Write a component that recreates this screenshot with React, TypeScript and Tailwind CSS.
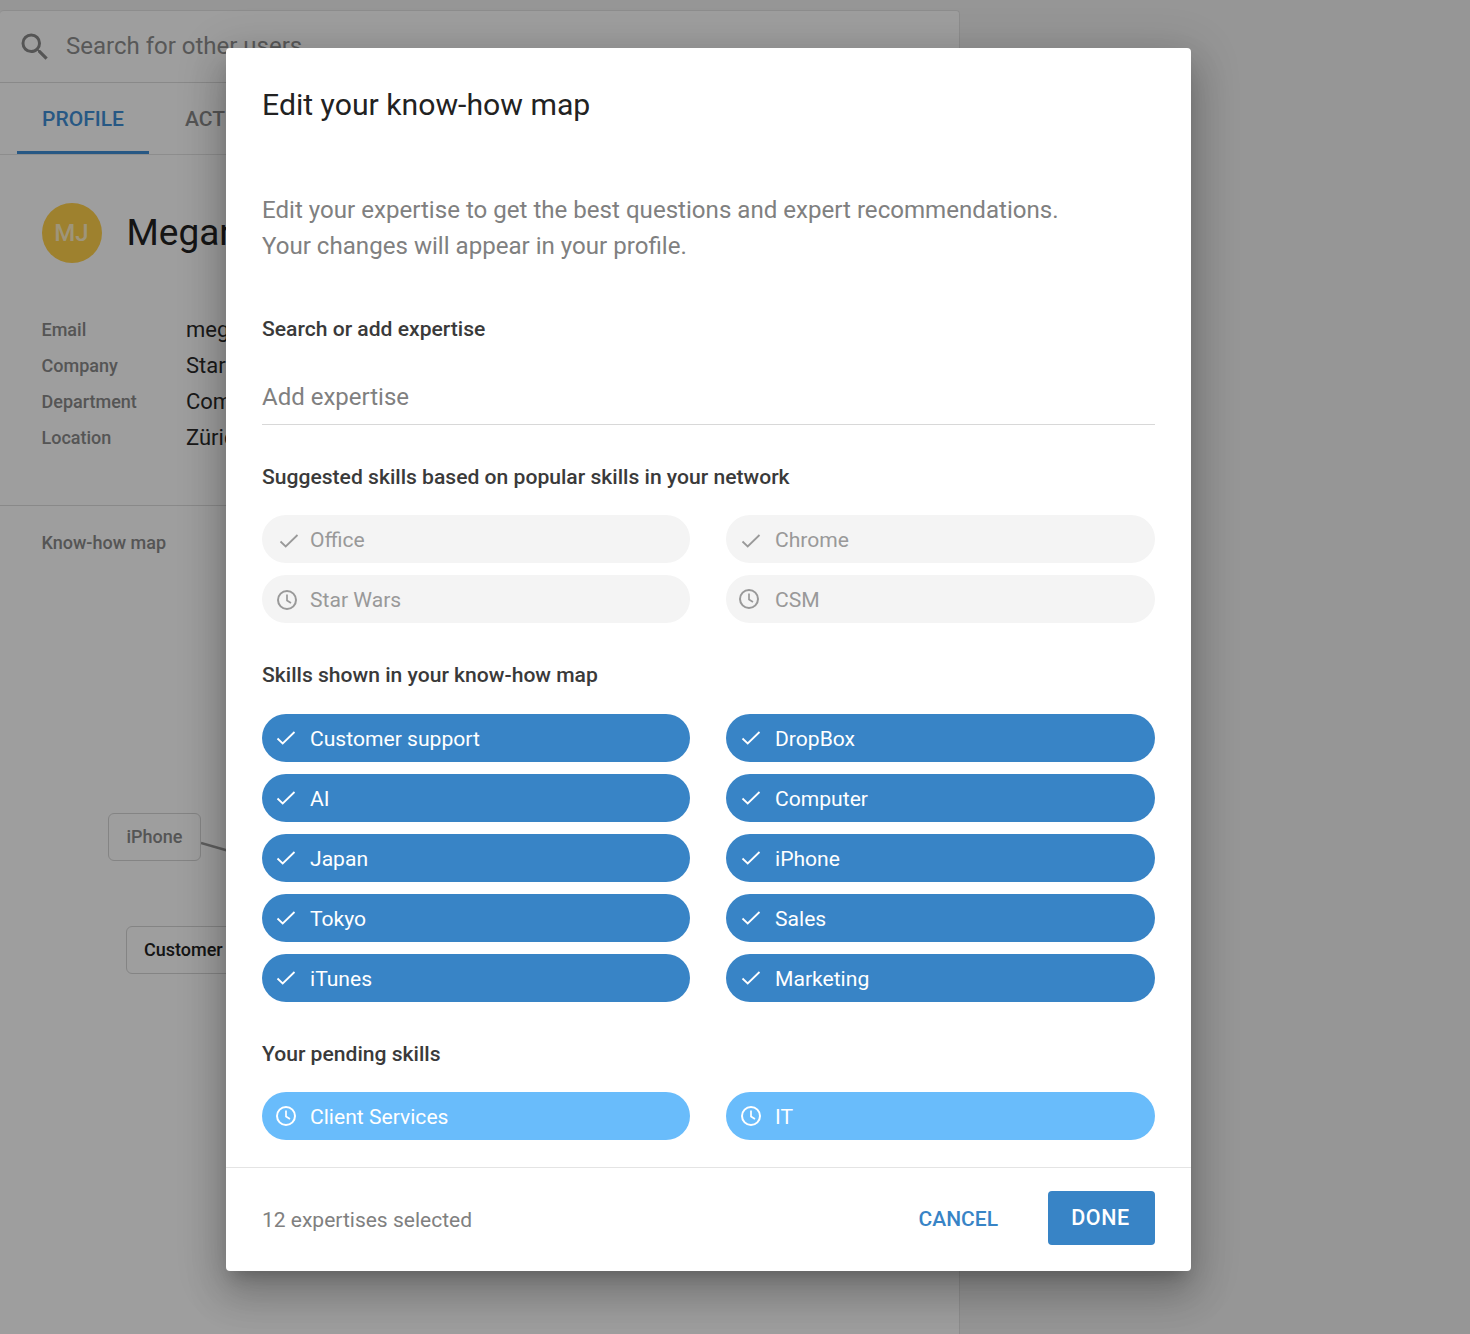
import React from 'react';

const suggested = [
  { name: 'Office', icon: 'check', iconClass: 'translate-x-[3px] translate-y-[2px]' },
  { name: 'Chrome', icon: 'check', iconClass: 'translate-y-[2px]' },
  { name: 'Star Wars', icon: 'clock', iconClass: 'translate-x-[1px] translate-y-[1px]' },
  { name: 'CSM', icon: 'clock', iconClass: '-translate-x-[2px]' },
];
const shown = ['Customer support', 'DropBox', 'AI', 'Computer', 'Japan', 'iPhone', 'Tokyo', 'Sales', 'iTunes', 'Marketing'];
const pending = ['Client Services', 'IT'];
const details = [
  ['Email', 'megan.jones@starwars.com'],
  ['Company', 'Star Wars Inc.'],
  ['Department', 'Communications'],
  ['Location', 'Zürich'],
];

const CheckIcon = ({ className = '' }: { className?: string }) => (
  <svg width="24" height="24" viewBox="0 0 24 24" fill="none" stroke="currentColor" strokeWidth="1.8" className={`shrink-0 ${className}`}>
    <path d="M3.5 12.5l5.2 5L20.5 6" />
  </svg>
);

const ClockIcon = ({ className = '' }: { className?: string }) => (
  <svg width="24" height="24" viewBox="0 0 24 24" fill="none" stroke="currentColor" strokeWidth="2" className={`shrink-0 ${className}`}>
    <circle cx="12" cy="12" r="9" />
    <path d="M12 6.5V12.5l4 2.5" strokeWidth="1.7" />
  </svg>
);

const Pill = ({ name, icon, className, iconClass }: { name: string; icon: string; className: string; iconClass?: string }) => (
  <div className={`flex h-12 items-center gap-3 rounded-full pl-3 text-[21.1px] even:pl-[13px] ${className}`}>
    {icon === 'check' ? <CheckIcon className={iconClass} /> : <ClockIcon className={iconClass} />}
    <span className="pt-[1px]">{name}</span>
  </div>
);

const SectionTitle = ({ children }: { children: React.ReactNode }) => (
  <h3 className="text-[21.1px] leading-7 font-medium text-[#3a3a3a]">{children}</h3>
);

export default function App() {
  return (
    <div className="relative h-[1334px] w-[1470px] overflow-hidden bg-[#f2f2f2] font-['Roboto',sans-serif]">
      {/* page behind the dialog */}
      <div className="mt-[10px] h-[1324px] w-[960px] rounded-t border-t border-r border-[#e4e4e4] bg-white">
        <div className="flex h-[72px] items-center gap-[13px] border-b border-[#dddddd] pl-[17px]">
          <svg width="36" height="36" viewBox="0 0 24 24" fill="#8a8a8a">
            <path d="M15.5 14h-.79l-.28-.27A6.471 6.471 0 0 0 16 9.5 6.5 6.5 0 1 0 9.5 16c1.61 0 3.09-.59 4.23-1.57l.27.28v.79l5 4.99L20.49 19l-4.99-5zm-6 0C7.01 14 5 11.99 5 9.5S7.01 5 9.5 5 14 7.01 14 9.5 11.99 14 9.5 14z" />
          </svg>
          <span className="pb-[2px] text-[24px] text-[#8f8f8f]">Search for other users</span>
        </div>
        <div className="flex h-[72px] border-b border-[#e4e4e4] pl-[17px]">
          <div className="flex h-[71px] w-[132px] items-center justify-center border-b-[3px] border-[#3f8fd6] pt-[5px] text-[21px] font-medium text-[#3f8fd6]">
            PROFILE
          </div>
          <div className="ml-9 flex items-center pt-[3px] text-[21px] font-medium text-[#8a8a8a]">ACTIVITY</div>
        </div>
        <div className="flex items-center gap-[25px] pt-[48px] pl-[41.5px]">
          <div className="flex size-[60px] items-center justify-center rounded-full bg-[#ffd04b] text-[24px] font-medium text-white/70">MJ</div>
          <span className="text-[37px] text-[#222222]">Megan Jones</span>
        </div>
        <div className="flex h-[243px] flex-col border-b border-[#dddddd] pt-12 pl-[41.5px]">
          {details.map(([label, value]) => (
            <div key={label} className="flex h-9 items-center">
              <span className="w-[144.5px] text-[18px] font-medium text-[#8a8a8a]">{label}</span>
              <span className="text-[22px] text-[#2a2a2a]">{value}</span>
            </div>
          ))}
        </div>
        <div className="relative pt-[23px] pl-[41.5px] text-[18px] font-medium text-[#8a8a8a]">
          Know-how map
          <div className="absolute top-[307px] left-[108px] flex h-12 w-[93px] items-center justify-center rounded-md border border-[#d5d5d5] pb-[2px] text-[#8a8a8a]">iPhone</div>
          <div className="absolute top-[420px] left-[126px] flex h-12 w-[200px] items-center rounded-md border border-[#d5d5d5] pb-[2px] pl-[17px] text-[#222222]">Customer support</div>
          <svg className="absolute top-[335px] left-[201px]" width="30" height="15" viewBox="0 0 30 15">
            <path d="M0 2l28 8" stroke="#9a9a9a" strokeWidth="2.5" />
          </svg>
        </div>
      </div>

      {/* scrim */}
      <div className="absolute inset-0 bg-black/38" />

      {/* dialog */}
      <div className="absolute top-[48px] left-[226px] flex h-[1223px] w-[965px] flex-col rounded bg-white shadow-[0_24px_38px_3px_rgba(0,0,0,0.16),0_9px_46px_8px_rgba(0,0,0,0.14),0_11px_15px_-7px_rgba(0,0,0,0.2)]">
        <div className="flex-1 px-9">
          <h2 className="pt-[36px] text-[30.2px] leading-[42px] text-[#222222]">Edit your know-how map</h2>
          <p className="mt-[66px] text-[24.1px] leading-9 text-[#808080]">
            Edit your expertise to get the best questions and expert recommendations.
            <br />
            Your changes will appear in your profile.
          </p>
          <div className="mt-[51px]">
            <SectionTitle>Search or add expertise</SectionTitle>
          </div>
          <div className="mt-[36px] h-[46px] border-b border-[#d8d8d8] text-[24px] leading-9 text-[#808080]">Add expertise</div>
          <div className="mt-[38px]">
            <SectionTitle>Suggested skills based on popular skills in your network</SectionTitle>
          </div>
          <div className="mt-[24px] grid grid-cols-[428px_429px] gap-x-9 gap-y-3">
            {suggested.map((s) => (
              <Pill key={s.name} name={s.name} icon={s.icon} iconClass={s.iconClass} className="bg-[#f4f4f4] text-[#999999]" />
            ))}
          </div>
          <div className="mt-[38px]">
            <SectionTitle>Skills shown in your know-how map</SectionTitle>
          </div>
          <div className="mt-[25px] grid grid-cols-[428px_429px] gap-x-9 gap-y-3">
            {shown.map((s) => (
              <Pill key={s} name={s} icon="check" className="bg-[#3884c6] text-white" />
            ))}
          </div>
          <div className="mt-[38px]">
            <SectionTitle>Your pending skills</SectionTitle>
          </div>
          <div className="mt-[24px] grid grid-cols-[428px_429px] gap-x-9 gap-y-3">
            {pending.map((s) => (
              <Pill key={s} name={s} icon="clock" className="bg-[#69bcfb] text-white" />
            ))}
          </div>
        </div>
        <div className="flex h-[104px] items-center justify-between border-t border-[#e4e4e4] px-9">
          <span className="pt-[2px] text-[21px] text-[#808080]">12 expertises selected</span>
          <div className="mb-[3px] flex items-center gap-[50px]">
            <button className="pt-[4px] text-[21px] font-medium text-[#3884c6]">CANCEL</button>
            <button className="flex h-[54px] w-[107px] items-center justify-center rounded bg-[#3884c6] pr-[2px] text-[21.5px] font-medium tracking-wide text-white">DONE</button>
          </div>
        </div>
      </div>
    </div>
  );
}
